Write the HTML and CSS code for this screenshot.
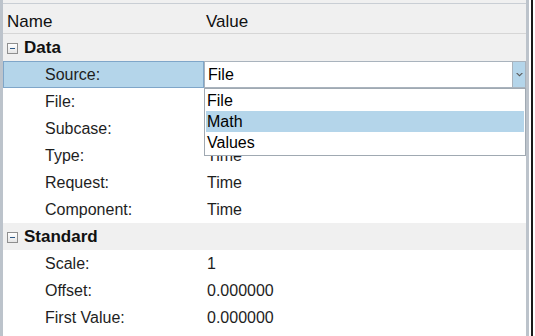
FILE: index.html
```html
<!DOCTYPE html>
<html lang="en">
<head>
  <meta charset="UTF-8">
  <title>Properties</title>
  <link rel="stylesheet" href="styles.css">
</head>
<body>
  <div class="frame">
    <div class="panel">
      <div class="header">
        <div class="col-name">Name</div>
        <div class="col-value">Value</div>
      </div>

      <div class="group">
        <span class="toggle"></span>
        <span class="group-title">Data</span>
      </div>
      <div class="row">
        <div class="cell-name selected">Source:</div>
        <div class="cell-value">
          <div class="combo">
            <span class="combo-text">File</span>
            <span class="combo-btn">
              <svg width="7" height="4" viewBox="0 0 7 4"><path d="M0 0 L3.5 3.5 L7 0 L5.5 0 L3.5 2 L1.5 0 Z" fill="#5a5a5a"/></svg>
            </span>
          </div>
        </div>
      </div>
      <div class="row">
        <div class="cell-name">File:</div>
        <div class="cell-value"></div>
      </div>
      <div class="row">
        <div class="cell-name">Subcase:</div>
        <div class="cell-value"></div>
      </div>
      <div class="row">
        <div class="cell-name">Type:</div>
        <div class="cell-value">Time</div>
      </div>
      <div class="row">
        <div class="cell-name">Request:</div>
        <div class="cell-value">Time</div>
      </div>
      <div class="row">
        <div class="cell-name">Component:</div>
        <div class="cell-value">Time</div>
      </div>

      <div class="group">
        <span class="toggle"></span>
        <span class="group-title">Standard</span>
      </div>
      <div class="row">
        <div class="cell-name">Scale:</div>
        <div class="cell-value">1</div>
      </div>
      <div class="row">
        <div class="cell-name">Offset:</div>
        <div class="cell-value">0.000000</div>
      </div>
      <div class="row">
        <div class="cell-name">First Value:</div>
        <div class="cell-value">0.000000</div>
      </div>

      <ul class="dropdown">
        <li>File</li>
        <li class="active">Math</li>
        <li>Values</li>
      </ul>
    </div>
  </div>
</body>
</html>
```

FILE: styles.css
```css
:root {
  --grid-border: #bcc3cb;
  --header-bg: #f0f0f0;
  --select-bg: #b4d5ea;
  --select-border: #7fa6c9;
  --text-main: #1e1e1e;
}

* {
  box-sizing: border-box;
  margin: 0;
  padding: 0;
}

body {
  font-family: "Liberation Sans", Arial, sans-serif;
  font-size: 16px;
  color: var(--text-main);
  background: #ffffff;
  width: 535px;
  height: 336px;
  overflow: hidden;
}

.frame {
  width: 533px;
  height: 336px;
  border-right: 2px solid #1a1a1a;
}

.panel {
  position: relative;
  width: 529px;
  height: 336px;
  border-left: 3px solid var(--grid-border);
  border-right: 3px solid var(--grid-border);
  background: #ffffff;
}

.header {
  display: flex;
  align-items: center;
  height: 34px;
  padding-top: 10px;
  font-size: 17px;
  color: #111111;
  background: var(--header-bg);
  box-shadow: inset 0 3px 0 #f0f0f0, inset 0 4px 0 #c9ced4;
  border-bottom: 1px solid #d6d6d6;
}

.col-name {
  width: 201px;
  padding-left: 4px;
}

.col-value {
  padding-left: 2px;
}

.group {
  display: flex;
  align-items: center;
  height: 27px;
  background: var(--header-bg);
}

.toggle {
  position: relative;
  width: 11px;
  height: 11px;
  margin: 1px 6px 0 4px;
  border: 1px solid #8f8f8f;
  background: linear-gradient(#ffffff, #e6e6e6);
}

.toggle::after {
  content: "";
  position: absolute;
  left: 2px;
  top: 4px;
  width: 5px;
  height: 1px;
  background: #2f5a88;
}

.group-title {
  font-size: 17px;
  font-weight: bold;
  color: #111111;
}

.row {
  display: flex;
  height: 27px;
}

.cell-name {
  width: 201px;
  padding-left: 42px;
  padding-top: 1px;
  display: flex;
  align-items: center;
}

.cell-name.selected {
  background: var(--select-bg);
  border: 1px solid var(--select-border);
  padding-left: 41px;
}

.cell-value {
  flex: 1;
  padding-left: 3px;
  padding-top: 1px;
  display: flex;
  align-items: center;
}

.row .cell-value:has(.combo) {
  padding: 0;
}

.combo {
  display: flex;
  width: 100%;
  height: 27px;
  border: 1px solid #a9b3bd;
  background: #ffffff;
}

.combo-text {
  flex: 1;
  display: flex;
  align-items: center;
  padding-left: 3px;
  color: #000000;
}

.combo-btn {
  width: 13px;
  display: flex;
  align-items: center;
  justify-content: center;
  background: var(--select-bg);
  border-left: 1px solid #a9b3bd;
}

.dropdown {
  position: absolute;
  left: 201px;
  top: 88px;
  width: 322px;
  height: 68px;
  list-style: none;
  padding: 1px;
  border: 1px solid #a0a9b2;
  background: #ffffff;
  color: #000000;
}

.dropdown li {
  height: 21px;
  line-height: 21px;
  padding-left: 1px;
}

.dropdown li.active {
  background: var(--select-bg);
}
```
